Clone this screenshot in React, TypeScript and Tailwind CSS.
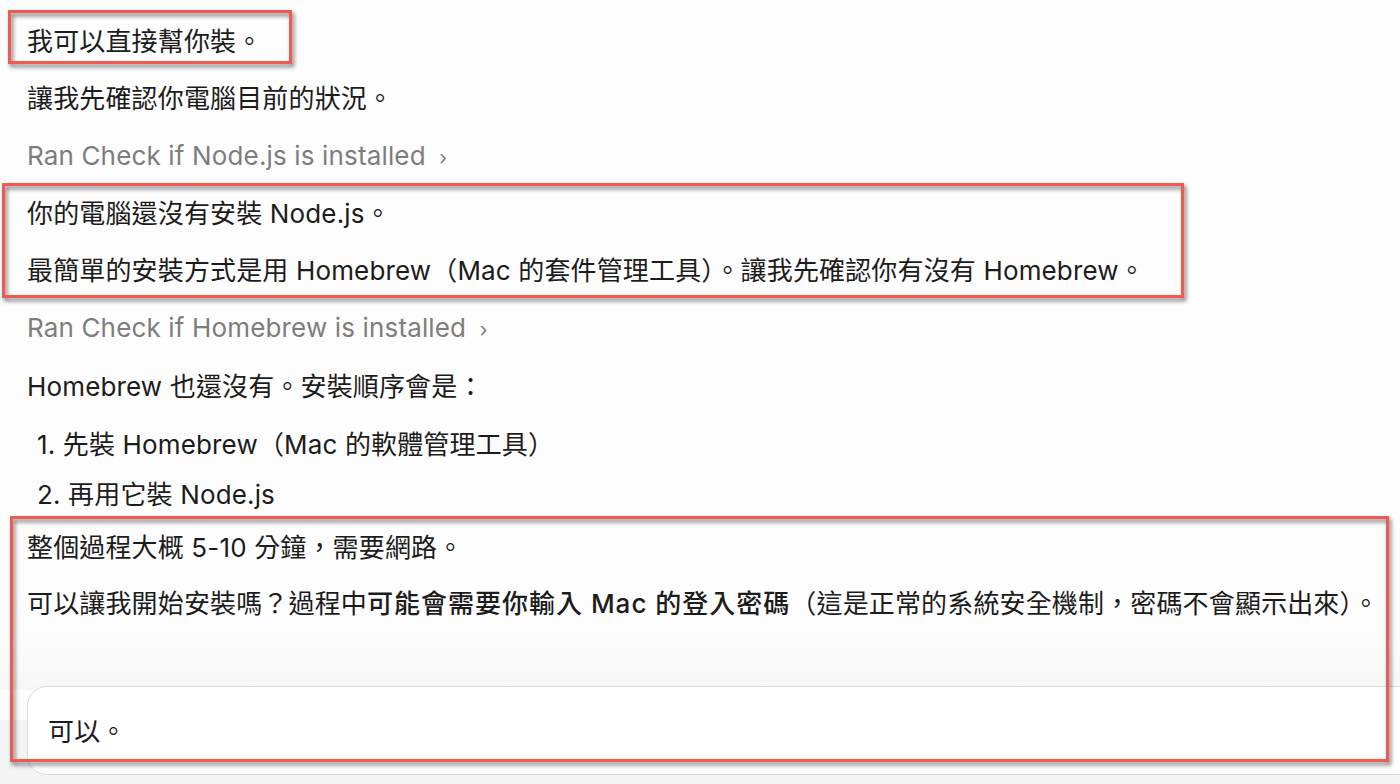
import React from "react";

const font = { fontFamily: 'Inter, "Noto Sans CJK TC", "Noto Sans CJK SC", sans-serif' };

function RedBox({ cls }: { cls: string }) {
  return (
    <div
      className={`absolute border-[3px] border-[#ef5b52] drop-shadow-[2px_3px_2px_rgba(0,0,0,0.55)] ${cls}`}
    />
  );
}

export default function App() {
  return (
    <div
      className="relative w-[1400px] h-[784px] overflow-hidden bg-[#fdfdfd] text-[#1c1c1c] text-[26px] tracking-[0.15px]"
      style={font}
    >
      <div className="pl-[27px] pt-[14px] flex flex-col">
        <p className="leading-[56.8px]">我可以直接幫你裝。</p>
        <p className="leading-[56.8px]">讓我先確認你電腦目前的狀況。</p>
        <p className="leading-[56.8px] text-[#7d7d7d]">
          Ran Check if Node.js is installed <span className="ml-[6px] text-[20px]">›</span>
        </p>
        <p className="leading-[56.8px]">你的電腦還沒有安裝 Node.js。</p>
        <p className="leading-[56.8px]">
          最簡單的安裝方式是用 Homebrew（Mac 的套件管理工具）。讓我先確認你有沒有 Homebrew。
        </p>
        <p className="leading-[56.8px] text-[#7d7d7d]">
          Ran Check if Homebrew is installed <span className="ml-[6px] text-[20px]">›</span>
        </p>
        <p className="leading-[56.8px]">Homebrew 也還沒有。安裝順序會是：</p>
        <ol className="mt-[4px] pl-[10px]">
          <li className="leading-[50px]">1. 先裝 Homebrew（Mac 的軟體管理工具）</li>
          <li className="leading-[50px]">2. 再用它裝 Node.js</li>
        </ol>
        <p className="leading-[56.8px]">整個過程大概 5-10 分鐘，需要網路。</p>
        <p className="leading-[56.8px] whitespace-nowrap">
          可以讓我開始安裝嗎？過程中<span className="font-medium tracking-[1px]">可能會需要你輸入 Mac 的登入密碼</span>（這是正常的系統安全機制，密碼不會顯示出來）。
        </p>
      </div>

      <div className="absolute left-0 right-0 top-[630px] h-[60px] bg-gradient-to-b from-[#fdfdfd] to-[#f7f7f7]" />
      <div className="absolute left-0 right-0 top-[720px] bottom-0 bg-[#f4f4f4]" />

      <div className="relative mt-[53px] ml-[27px] w-[1420px] h-[89px] rounded-l-[20px] border border-[#dcdcdc] bg-white flex items-center pl-[20px] pt-[2px]">
        <span className="leading-[30px]">可以。</span>
      </div>

      <RedBox cls="left-[8px] top-[10px] w-[284px] h-[54px]" />
      <RedBox cls="left-[2px] top-[183px] w-[1182px] h-[115px]" />
      <RedBox cls="left-[10px] top-[516px] w-[1379px] h-[246px]" />
    </div>
  );
}
